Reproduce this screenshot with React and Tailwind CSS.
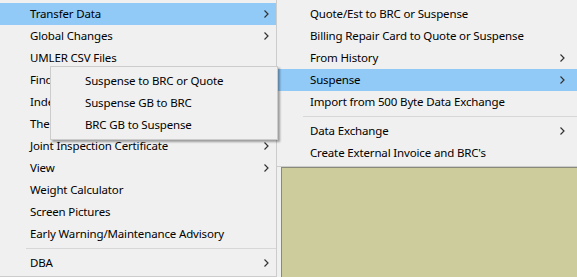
const leftItems = [
  { label: 'Transfer Data', sub: true, active: true },
  { label: 'Global Changes', sub: true },
  { label: 'UMLER CSV Files' },
  { label: 'Find' },
  { label: 'Index' },
  { label: 'The' },
  { label: 'Joint Inspection Certificate', sub: true },
  { label: 'View', sub: true },
  { label: 'Weight Calculator' },
  { label: 'Screen Pictures' },
  { label: 'Early Warning/Maintenance Advisory' },
  { sep: true },
  { label: 'DBA', sub: true },
];

const rightItems = [
  { label: 'Quote/Est to BRC or Suspense' },
  { label: 'Billing Repair Card to Quote or Suspense' },
  { label: 'From History', sub: true },
  { label: 'Suspense', sub: true, active: true },
  { label: 'Import from 500 Byte Data Exchange' },
  { sep: true },
  { label: 'Data Exchange', sub: true },
  { label: "Create External Invoice and BRC's" },
];

const popupItems = ['Suspense to BRC or Quote', 'Suspense GB to BRC', 'BRC GB to Suspense'];

function Chevron() {
  return (
    <svg width="5" height="8" viewBox="0 0 5 8" className="shrink-0">
      <path d="M0.5 0.5 L4 4 L0.5 7.5" fill="none" stroke="#333" strokeWidth="1.2" />
    </svg>
  );
}

function MenuRow({ item, textPad, arrowPad }) {
  if (item.sep) {
    return (
      <div className="h-[7px] flex items-center pl-[26px]">
        <div className="h-px w-full bg-[#d7d7d7]" />
      </div>
    );
  }
  return (
    <div
      className={`h-[22px] flex items-center justify-between ${textPad} ${arrowPad} ${
        item.active ? 'bg-[#91c9f7]' : ''
      }`}
    >
      <span className="whitespace-nowrap">{item.label}</span>
      {item.sub && <Chevron />}
    </div>
  );
}

export default function App() {
  return (
    <div
      className="relative w-[577px] h-[277px] overflow-hidden flex bg-[#f0f0f0] text-[11.5px] tracking-[-0.15px] text-black leading-none"
      style={{ fontFamily: '"Noto Sans", "Open Sans", sans-serif' }}
    >
      {/* main menu */}
      <div className="w-[277px] h-[277px] pt-[3px] border-r border-b border-[#cccccc] bg-[#f0f0f0]">
        {leftItems.map((item, i) => (
          <MenuRow key={i} item={item} textPad="pl-[30px]" arrowPad="pr-[7px]" />
        ))}
      </div>

      {/* transfer data submenu + desktop */}
      <div className="flex-1 flex flex-col">
        <div className="h-[167px] pt-[3px] border-b border-[#cccccc] bg-[#f0f0f0]">
          {rightItems.map((item, i) => (
            <MenuRow key={i} item={item} textPad="pl-[33px]" arrowPad="pr-[12px]" />
          ))}
        </div>
        <div className="flex-1 ml-[4px] bg-[#cdcc9c] border-t border-l border-[#8a8a7a]" />
      </div>

      {/* suspense popup */}
      <div className="absolute left-[50px] top-[66px] w-[228px] pt-[3px] pb-[3px] bg-[#f0f0f0] border border-[#cccccc] shadow-[2px_2px_2px_rgba(0,0,0,0.35)]">
        {popupItems.map((t) => (
          <div key={t} className="h-[22px] flex items-center pl-[34px] whitespace-nowrap">
            {t}
          </div>
        ))}
      </div>
    </div>
  );
}
